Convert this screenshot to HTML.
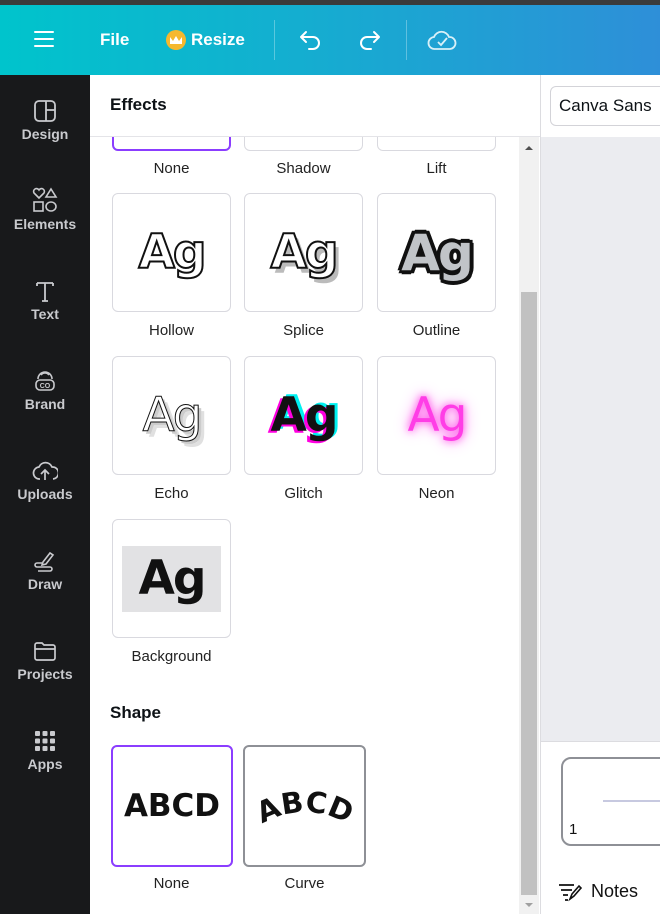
<!DOCTYPE html>
<html><head><meta charset="utf-8"><style>
*{box-sizing:border-box;margin:0;padding:0}
body{width:660px;height:914px;overflow:hidden;font-family:"Liberation Sans",sans-serif;background:#fff;position:relative}
.abs{position:absolute}
.top{left:0;top:0;width:660px;height:5px;background:#3b3b3b}
.hdr{left:0;top:5px;width:660px;height:70px;background:linear-gradient(90deg,#00c4cc 0%,#14aed0 45%,#2e8fd8 100%);color:#fff}
.side{left:0;top:75px;width:90px;height:839px;background:#18191b}
.si{position:absolute;left:0;width:90px;text-align:center;color:#c9cace;font-size:14px;font-weight:bold}
.si svg{display:block;margin:0 auto 3px}
.card{position:absolute;width:119px;height:119px;border:1px solid #d9d9df;border-radius:6px;background:#fff;overflow:hidden}
.lbl{position:absolute;width:119px;text-align:center;font-size:15px;color:#222}
.ag{position:absolute;left:0;top:0;width:100%;height:100%;display:flex;align-items:center;justify-content:center;font-size:47px;font-weight:bold;font-family:"DejaVu Sans","Liberation Sans",sans-serif;letter-spacing:-2px}
</style></head><body>
<div class="abs top"></div>
<div class="abs hdr">
 <svg class="abs" style="left:34px;top:25px" width="20" height="18"><path d="M1 2h18M1 9h18M1 16h18" stroke="#fff" stroke-width="2" stroke-linecap="round"/></svg>
 <div class="abs" style="left:100px;top:25px;font-size:17px;font-weight:bold">File</div>
 <div class="abs" style="left:166px;top:25px;width:20px;height:20px;border-radius:50%;background:#f5b82e"></div>
 <svg class="abs" style="left:169px;top:29px" width="14" height="12"><path d="M1 3l3 4 3-5 3 5 3-4v7H1z" fill="#fff"/></svg>
 <div class="abs" style="left:191px;top:25px;font-size:17px;font-weight:bold">Resize</div>
 <div class="abs" style="left:274px;top:15px;width:1px;height:40px;background:rgba(255,255,255,.3)"></div>
 <svg class="abs" style="left:298px;top:24px" width="26" height="24"><path d="M8 3L3 8l5 5M3 8h12a6 6 0 010 12h-4" fill="none" stroke="#fff" stroke-width="2" stroke-linecap="round" stroke-linejoin="round"/></svg>
 <svg class="abs" style="left:356px;top:24px" width="26" height="24"><path d="M18 3l5 5-5 5M23 8H11a6 6 0 000 12h4" fill="none" stroke="#fff" stroke-width="2" stroke-linecap="round" stroke-linejoin="round"/></svg>
 <div class="abs" style="left:406px;top:15px;width:1px;height:40px;background:rgba(255,255,255,.3)"></div>
 <svg class="abs" style="left:427px;top:22px" width="30" height="26"><path d="M8 22a6 6 0 01-1-12 8 8 0 0115 0 6 6 0 011 12z" fill="none" stroke="#d8f0f8" stroke-width="1.8"/><path d="M11 15l3 3 6-7" fill="none" stroke="#d8f0f8" stroke-width="1.8"/></svg>
</div>
<div class="abs side">
 <div class="si" style="top:24px"><svg width="24" height="24"><rect x="2" y="2" width="20" height="20" rx="4" fill="none" stroke="#c9cace" stroke-width="1.8"/><path d="M13 2v20M13 11h9" stroke="#c9cace" stroke-width="1.8"/></svg>Design</div>
 <div class="si" style="top:112px"><svg width="26" height="26"><path d="M7 11L2 6a2.5 2.5 0 015-3 2.5 2.5 0 015 3z" fill="none" stroke="#c9cace" stroke-width="1.6"/><path d="M19 2l5 8h-10z" fill="none" stroke="#c9cace" stroke-width="1.6"/><rect x="2" y="15" width="9" height="9" fill="none" stroke="#c9cace" stroke-width="1.6"/><ellipse cx="19" cy="19.5" rx="5" ry="4.5" fill="none" stroke="#c9cace" stroke-width="1.6"/></svg>Elements</div>
 <div class="si" style="top:204px"><svg width="24" height="24"><path d="M4 4h16M12 4v18M4 4v3M20 4v3M9 22h6" stroke="#c9cace" stroke-width="1.8" fill="none"/></svg>Text</div>
 <div class="si" style="top:294px"><svg width="24" height="24"><path d="M5 10a7 7 0 0114 0M8 6a5 5 0 018 0" fill="none" stroke="#c9cace" stroke-width="1.6"/><rect x="3" y="11" width="18" height="10" rx="4" fill="none" stroke="#c9cace" stroke-width="1.6"/><text x="12" y="19" font-size="7" font-weight="bold" fill="#c9cace" text-anchor="middle" font-family="Liberation Sans">CO</text></svg>Brand</div>
 <div class="si" style="top:384px"><svg width="26" height="24"><path d="M8 20a6 6 0 01-1-12 7 7 0 0113 0 6 6 0 011 12" fill="none" stroke="#c9cace" stroke-width="1.7"/><path d="M13 21v-9M9 15l4-4 4 4" fill="none" stroke="#c9cace" stroke-width="1.7"/></svg>Uploads</div>
 <div class="si" style="top:474px"><svg width="24" height="24"><path d="M10 13l7-9 3 2-7 9-4 1z" fill="none" stroke="#c9cace" stroke-width="1.6"/><path d="M9 14H4a2 2 0 000 4h13a2 2 0 010 4H5" fill="none" stroke="#c9cace" stroke-width="1.6"/></svg>Draw</div>
 <div class="si" style="top:564px"><svg width="24" height="24"><path d="M2 6a2 2 0 012-2h5l2 2h9a2 2 0 012 2v11a2 2 0 01-2 2H4a2 2 0 01-2-2zM2 10h20" fill="none" stroke="#c9cace" stroke-width="1.7"/></svg>Projects</div>
 <div class="si" style="top:654px"><svg width="24" height="24" fill="#c9cace"><rect x="2" y="2" width="5" height="5" rx="1"/><rect x="9.5" y="2" width="5" height="5" rx="1"/><rect x="17" y="2" width="5" height="5" rx="1"/><rect x="2" y="9.5" width="5" height="5" rx="1"/><rect x="9.5" y="9.5" width="5" height="5" rx="1"/><rect x="17" y="9.5" width="5" height="5" rx="1"/><rect x="2" y="17" width="5" height="5" rx="1"/><rect x="9.5" y="17" width="5" height="5" rx="1"/><rect x="17" y="17" width="5" height="5" rx="1"/></svg>Apps</div>
</div>

<div class="abs" style="left:110px;top:95px;font-size:17px;font-weight:bold;color:#0d1216">Effects</div>
<div class="abs" style="left:90px;top:136px;width:450px;height:1px;background:#e4e4e8"></div>
<div class="abs" style="left:540px;top:75px;width:1px;height:839px;background:#dcdce0"></div>
<div class="abs" style="left:519px;top:137px;width:20px;height:777px;background:#f1f1f1"></div>
<div class="abs" style="left:521px;top:292px;width:16px;height:603px;background:#c1c1c1"></div>
<svg class="abs" style="left:524px;top:144px" width="10" height="8"><path d="M1 6l4-4 4 4z" fill="#505050"/></svg>
<svg class="abs" style="left:524px;top:901px" width="10" height="8"><path d="M1 2l4 4 4-4z" fill="#a0a0a0"/></svg>

<div style="position:absolute;left:90px;top:137px;width:429px;height:777px;overflow:hidden">
 <div class="card" style="left:22px;top:-30px;height:44px;border:2px solid #8b3dff"></div>
 <div class="card" style="left:154px;top:-30px;height:44px"></div>
 <div class="card" style="left:287px;top:-30px;height:44px"></div>
</div>
<div class="lbl" style="left:112px;top:160px">None</div>
<div class="lbl" style="left:244px;top:160px">Shadow</div>
<div class="lbl" style="left:377px;top:160px">Lift</div>

<div class="card" style="left:112px;top:193px"><div class="ag" style="color:#fff;-webkit-text-stroke:2px #111">Ag</div></div>
<div class="card" style="left:244px;top:193px"><div class="ag" style="color:#fff;-webkit-text-stroke:2px #111;text-shadow:4px 5px 0 #bbb">Ag</div></div>
<div class="card" style="left:377px;top:193px"><div class="ag" style="color:#c1c4c8;font-size:50px;text-shadow:2px 0 0 #111,-2px 0 0 #111,0 2px 0 #111,0 -2px 0 #111,3px 3px 0 #111,-3px -3px 0 #111,3px -3px 0 #111,-3px 3px 0 #111,4px 0 0 #111,-4px 0 0 #111,0 4px 0 #111,0 -4px 0 #111">Ag</div></div>
<div class="lbl" style="left:112px;top:322px">Hollow</div>
<div class="lbl" style="left:244px;top:322px">Splice</div>
<div class="lbl" style="left:377px;top:322px">Outline</div>

<div class="card" style="left:112px;top:356px"><div class="ag" style="font-weight:normal;color:#fff;-webkit-text-stroke:1px #111;text-shadow:3px 3px 0 #ccc,6px 6px 0 #e0e0e0">Ag</div></div>
<div class="card" style="left:244px;top:356px"><div class="ag" style="color:#111;text-shadow:-3px 2px 0 #ff00e0,3px -2px 0 #00f0f0">Ag</div></div>
<div class="card" style="left:377px;top:356px"><div class="ag" style="font-weight:normal;color:#ff3de6;text-shadow:0 0 8px #ff40e8,0 0 16px #ff80f0">Ag</div></div>
<div class="lbl" style="left:112px;top:485px">Echo</div>
<div class="lbl" style="left:244px;top:485px">Glitch</div>
<div class="lbl" style="left:377px;top:485px">Neon</div>

<div class="card" style="left:112px;top:519px"><div class="abs" style="left:9px;top:26px;width:99px;height:66px;background:#e2e2e4"></div><div class="ag" style="color:#111">Ag</div></div>
<div class="lbl" style="left:112px;top:648px">Background</div>

<div class="abs" style="left:110px;top:703px;font-size:17px;font-weight:bold;color:#0d1216">Shape</div>
<div class="card" style="left:111px;top:745px;width:122px;height:122px;border:2px solid #8b3dff"><div class="ag" style="font-size:31px;letter-spacing:0;color:#111">ABCD</div></div>
<div class="card" style="left:243px;top:745px;width:123px;height:122px;border:2px solid #8e9096"><svg width="119" height="118"><path id="cv" d="M12 80Q60 50 108 80" fill="none"/><text font-size="29" font-weight="bold" font-family="DejaVu Sans" fill="#111"><textPath href="#cv" startOffset="50%" text-anchor="middle">ABCD</textPath></text></svg></div>
<div class="lbl" style="left:112px;top:875px">None</div>
<div class="lbl" style="left:245px;top:875px">Curve</div>

<div class="abs" style="left:550px;top:86px;width:130px;height:40px;border:1px solid #d3d3d8;border-radius:6px;font-size:17px;color:#0d1216;padding:9px 0 0 8px">Canva Sans</div>
<div class="abs" style="left:541px;top:137px;width:119px;height:604px;background:#ebecf0"></div>
<div class="abs" style="left:541px;top:741px;width:119px;height:1px;background:#dcdce0"></div>
<div class="abs" style="left:561px;top:757px;width:110px;height:89px;border:2px solid #8e9096;border-radius:10px;background:#fff"></div>
<div class="abs" style="left:603px;top:800px;width:60px;height:2px;background:#c7c9e0"></div>
<div class="abs" style="left:569px;top:821px;font-size:15px;color:#111">1</div>
<svg class="abs" style="left:558px;top:882px" width="24" height="20"><path d="M1 3h15M3 8h11M5 13h5M7 18h3" stroke="#111" stroke-width="1.7"/><path d="M12 17l2-5 7-8 2 2-7 8z" fill="none" stroke="#111" stroke-width="1.6"/></svg>
<div class="abs" style="left:591px;top:881px;font-size:18px;color:#111">Notes</div>
</body></html>
